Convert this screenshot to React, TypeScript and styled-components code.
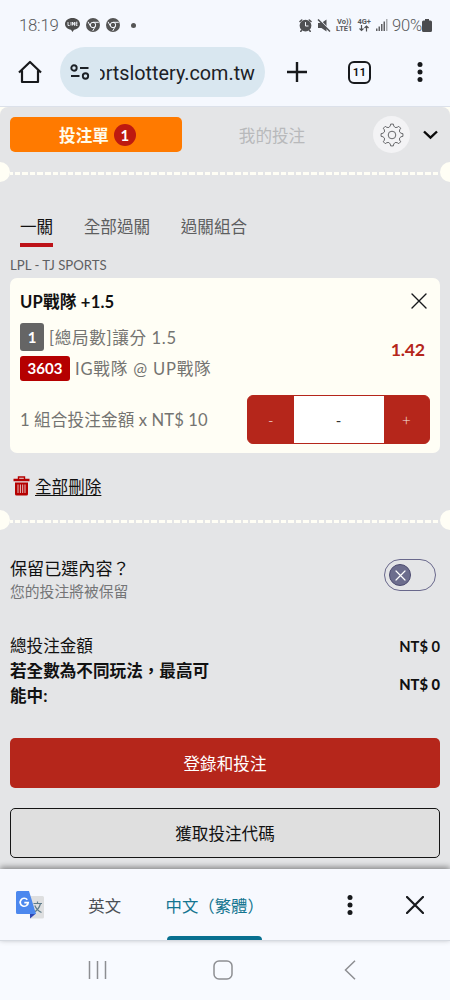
import React from 'react';
import styled, { createGlobalStyle } from 'styled-components';

const GlobalStyle = createGlobalStyle`
  * { box-sizing: border-box; }
  body { margin: 0; background: #fffff7; }
  button { font: inherit; border: 0; padding: 0; margin: 0; background: none; color: inherit; }
  svg { display: block; flex: none; }
`;

const cream = '#fffef5';
const red = '#b5261b';

const Screen = styled.div`
  width: 450px;
  height: 1000px;
  display: flex;
  flex-direction: column;
  overflow: hidden;
  background: ${cream};
  color: #111;
  font-family: Lato, 'Noto Sans CJK TC', sans-serif;
  font-size: 16.6px;
  white-space: nowrap;
`;

const BrowserTop = styled.header`
  flex: none;
  height: 107px;
  background: #f5f8fe;
  border-bottom: 1px solid #dce1ea;
  font-family: Roboto, sans-serif;
`;

const StatusBar = styled.div`
  height: 47px;
  padding: 3px 18px 0 19px;
  display: flex;
  align-items: center;
  color: #58595c;
  font-size: 17px;
  font-weight: 300;
`;

const Clock = styled.span`
  width: 46px;
  font-size: 16.8px;
  letter-spacing: -0.25px;
`;

const StatusIcons = styled.div<{ $gap: number }>`
  display: flex;
  align-items: center;
  gap: ${(p) => p.$gap}px;
`;

const Dot = styled.span`
  width: 5px;
  height: 5px;
  margin-left: 5px;
  border-radius: 50%;
  background: #555;
`;

const Spacer = styled.div`
  flex: 1;
`;

const Network = styled.div`
  display: flex;
  flex-direction: column;
  align-items: center;
  font-size: 7.5px;
  font-weight: 700;
  line-height: 7px;
`;

const Percent = styled.span`
  font-size: 16.6px;
  letter-spacing: -0.2px;
  margin-left: 4px;
`;

const AddressRow = styled.div`
  height: 50px;
  display: flex;
  align-items: center;
  padding: 0 27px 0 18px;
`;

const Address = styled.div`
  width: 205px;
  height: 50px;
  margin: 0 22px 0 18px;
  padding-left: 10px;
  border-radius: 25px;
  display: flex;
  align-items: center;
  background: #d9e7f0;
  color: #1c2126;
  font-size: 19.8px;
`;

const Host = styled.span`
  width: 155px;
  margin: 2px 0 0 10px;
  display: flex;
  justify-content: flex-end;
  overflow: hidden;
`;

const TabCount = styled.div`
  width: 23px;
  height: 23px;
  margin: 0 auto 0 41px;
  border: 2px solid #17191c;
  border-radius: 6px;
  display: flex;
  align-items: center;
  justify-content: center;
  font-size: 11.5px;
  font-weight: 600;
  letter-spacing: 0.3px;
`;

const Slip = styled.main`
  flex: none;
  height: 762px;
  border-radius: 8px 8px 0 0;
  background: #e4e5e7;
  display: flex;
  flex-direction: column;
  & > * { flex: none; }
`;

const SlipHeader = styled.div`
  height: 55px;
  padding: 0 10px;
  display: flex;
  align-items: center;
`;

const SlipTab = styled.button<{ $active?: boolean }>`
  width: ${(p) => (p.$active ? 172 : 180)}px;
  height: 35px;
  padding-left: ${(p) => (p.$active ? 3 : 0)}px;
  border-radius: 5px;
  display: flex;
  align-items: center;
  justify-content: center;
  gap: 5px;
  background: ${(p) => (p.$active ? '#ff7a00' : 'transparent')};
  color: ${(p) => (p.$active ? '#fffbea' : '#b8b9bb')};
  font-weight: ${(p) => (p.$active ? 700 : 400)};
`;

const Badge = styled.span`
  width: 22px;
  height: 22px;
  border-radius: 50%;
  background: #bd1a10;
  display: flex;
  align-items: center;
  justify-content: center;
  font-size: 15px;
  color: #fff;
`;

const GearButton = styled.button`
  width: 37px;
  height: 37px;
  margin: 0 13px 0 11px;
  border-radius: 50%;
  background: #f3f3f5;
  display: flex;
  align-items: center;
  justify-content: center;
`;

const Perforation = styled.div`
  height: 20px;
  display: flex;
  align-items: center;
  justify-content: space-between;
`;

const Notch = styled.span<{ $side: 'left' | 'right' }>`
  width: 10px;
  height: 20px;
  border-radius: ${(p) => (p.$side === 'left' ? '0 10px 10px 0' : '10px 0 0 10px')};
  background: ${cream};
`;

const Dashes = styled.span`
  flex: 1;
  height: 3px;
  margin-top: 3px;
  background: repeating-linear-gradient(90deg, ${cream} 0 2.6px, transparent 2.6px 4.6px, ${cream} 4.6px 7.6px);
`;

const ModeTabs = styled.nav`
  height: 65px;
  padding-left: 20px;
  display: flex;
  align-items: flex-end;
  gap: 30.6px;
  color: #5d5e60;
`;

const ModeTab = styled.button<{ $active?: boolean }>`
  height: 34px;
  line-height: 26px;
  padding-bottom: 2px;
  border-bottom: 4px solid ${(p) => (p.$active ? '#bd1218' : 'transparent')};
  color: ${(p) => (p.$active ? '#111' : 'inherit')};
`;

const League = styled.div`
  height: 31px;
  padding: 8px 0 0 10px;
  line-height: 20px;
  font-size: 13.2px;
  color: #5f6062;
`;

const BetCard = styled.section`
  height: 175px;
  margin: 0 10px;
  padding: 10px 10px 0;
  border-radius: 7px;
  background: ${cream};
`;

const CardTop = styled.div`
  height: 26px;
  padding-right: 3px;
  display: flex;
  align-items: center;
  justify-content: space-between;
  font-weight: 700;
  letter-spacing: 0.2px;
`;

const CardInfo = styled.div`
  height: 72px;
  padding-right: 5px;
  display: flex;
  align-items: center;
  justify-content: space-between;
`;

const Lines = styled.div`
  display: flex;
  flex-direction: column;
  padding-top: 5px;
`;

const Line = styled.div`
  height: 31px;
  display: flex;
  align-items: center;
  gap: 5px;
  color: #747471;
`;

const Chip = styled.span<{ $red?: boolean }>`
  width: ${(p) => (p.$red ? 50 : 24)}px;
  height: ${(p) => (p.$red ? 25 : 28)}px;
  border-radius: 3px;
  background: ${(p) => (p.$red ? '#b50000' : '#656565')};
  color: #fff;
  display: flex;
  align-items: center;
  justify-content: center;
  font-size: 15px;
  font-weight: 700;
`;

const Spaced = styled.span<{ $by: number }>`
  letter-spacing: ${(p) => p.$by}px;
`;

const Odds = styled.strong`
  margin-top: -2px;
  font-size: 17.8px;
  letter-spacing: -0.2px;
  color: ${red};
`;

const StakeRow = styled.div`
  height: 49px;
  margin-top: 9px;
  display: flex;
  align-items: center;
  justify-content: space-between;
  color: #747471;
`;

const StakeLabel = styled.span`
  padding-bottom: 1px;
  letter-spacing: 0.12px;
`;

const Stepper = styled.div`
  width: 183px;
  height: 49px;
  border: 1px solid ${red};
  border-radius: 6px;
  background: ${red};
  display: flex;
`;

const StepButton = styled.button`
  width: 45.500px;
  color: #f8e6e1;
  font-size: 15px;
  font-weight: 300;
`;

const Stake = styled.div`
  flex: 1;
  background: #fff;
  color: #333;
  display: flex;
  align-items: center;
  justify-content: center;
  font-size: 15px;
`;

const DeleteRow = styled.div`
  height: 57px;
  padding: 9px 0 0 13px;
  display: flex;
  align-items: center;
  gap: 5px;
`;

const DeleteLink = styled.button`
  text-decoration: underline;
  text-underline-offset: 2px;
  text-decoration-thickness: 1px;
`;

const KeepRow = styled.div`
  height: 104px;
  padding: 0 14px 0 10px;
  display: flex;
  align-items: center;
  justify-content: space-between;
`;

const KeepText = styled.div`
  padding-bottom: 4px;
  display: flex;
  flex-direction: column;
  line-height: 23px;
  font-size: 17.1px;
`;

const KeepHint = styled.span`
  font-size: 14.8px;
  color: #747577;
`;

const Toggle = styled.button`
  width: 52px;
  height: 32px;
  margin-bottom: 14px;
  padding-left: 4px;
  border: 1.4px solid #69688c;
  border-radius: 16px;
  display: flex;
  align-items: center;
`;

const Knob = styled.span`
  width: 22px;
  height: 22px;
  border: 1.5px solid #4c4b70;
  border-radius: 50%;
  background: #6c6d8d;
  display: flex;
  align-items: center;
  justify-content: center;
`;

const Totals = styled.div`
  height: 104px;
  padding: 0 10px;
  line-height: 25px;
`;

const TotalRow = styled.div<{ $bold?: boolean }>`
  display: flex;
  align-items: center;
  justify-content: space-between;
  font-weight: ${(p) => (p.$bold ? 700 : 400)};
`;

const TotalLabel = styled.span`
  width: 202px;
  white-space: normal;
`;

const Amount = styled.strong`
  font-size: 14.7px;
`;

const Action = styled.button<{ $outline?: boolean }>`
  height: 50px;
  margin: 0 10px 20px;
  border-radius: 5px;
  border: ${(p) => (p.$outline ? '1.4px solid #151515' : '0')};
  background: ${(p) => (p.$outline ? '#dfdfdf' : red)};
  color: ${(p) => (p.$outline ? '#111' : '#fff')};
`;

const TranslateBar = styled.div`
  position: relative;
  flex: none;
  height: 72px;
  padding: 0 26px 0 16px;
  display: flex;
  align-items: center;
  background: #f7f9fe;
  border-bottom: 1px solid #d6dae1;
  box-shadow: 0 -2px 6px rgba(0, 0, 0, 0.42);
`;

const Language = styled.button<{ $active?: boolean }>`
  width: ${(p) => (p.$active ? 95 : 33)}px;
  height: 71px;
  margin-left: 45px;
  padding-top: 3px;
  display: flex;
  flex-direction: column;
  justify-content: space-between;
  font-size: 16.4px;
  line-height: 68px;
  color: ${(p) => (p.$active ? '#147590' : '#4b4f55')};
  &::after {
    content: '';
    height: 4px;
    width: 100%;
    margin-top: -4px;
    border-radius: 4px 4px 0 0;
    background: ${(p) => (p.$active ? '#087090' : 'transparent')};
  }
`;

const LanguageName = styled.span`
  height: 68px;
  margin-left: -1.5px;
`;

const SystemNav = styled.footer`
  flex: none;
  height: 59px;
  padding: 0 94px 2px 88px;
  display: grid;
  grid-template-columns: 125px 1fr auto;
  align-items: center;
  background: #f8faff;
`;

const ChromeGlyph = () => (
  <svg width="14" height="14" viewBox="0 0 14 14">
    <circle cx="7" cy="7" r="7" fill="#555" />
    <circle cx="7" cy="7" r="2.7" fill="none" stroke="#f5f8fe" strokeWidth="1" />
    <path d="M7 4.3h5.8M4.6 8.3 2 3.8M9.4 8.3 6.7 13" stroke="#f5f8fe" strokeWidth="1" />
  </svg>
);

const MoreIcon = () => (
  <svg width="6" height="20" viewBox="0 0 6 20" fill="#17191c">
    <circle cx="3" cy="2.5" r="2.5" />
    <circle cx="3" cy="10" r="2.5" />
    <circle cx="3" cy="17.5" r="2.5" />
  </svg>
);

const CloseIcon = ({ size, width, color = '#17191c' }: { size: number; width: number; color?: string }) => (
  <svg width={size} height={size} viewBox={`0 0 ${size} ${size}`}>
    <path d={`M1 1 ${size - 1} ${size - 1}M${size - 1} 1 1 ${size - 1}`} stroke={color} strokeWidth={width} strokeLinecap="round" />
  </svg>
);

const gearPath = (() => {
  const pts: string[] = [];
  const at = (r: number, deg: number) => {
    const a = (deg * Math.PI) / 180;
    return `${(12 + r * Math.cos(a)).toFixed(2)} ${(12 + r * Math.sin(a)).toFixed(2)}`;
  };
  for (let i = 0; i < 8; i++) {
    const d = i * 45 - 90;
    pts.push(`${i ? 'L' : 'M'}${at(11, d - 7)}L${at(11, d + 7)}L${at(9.2, d + 11)}Q${at(7.2, d + 22.5)} ${at(9.2, d + 34)}`);
  }
  return pts.join('') + 'Z';
})();

const TranslateIcon = () => (
  <svg width="28" height="28" viewBox="0 0 28 28">
    <path d="M13 5h13.5A1.5 1.5 0 0 1 28 6.5V26a1.5 1.5 0 0 1-1.5 1.5H14z" fill="#dedfe0" />
    <path d="M17.5 12.5H26M21.5 10.5v2M24.5 12.5c-1 4-3.5 7-6.5 9M18.8 14.5c1.2 3 3.5 5.5 6.7 7" stroke="#607d8b" strokeWidth="1.2" fill="none" />
    <path d="M14 22.5h6L14 27.5z" fill="#3049b5" />
    <path d="M1.5 0H13l7 23H1.5A1.5 1.5 0 0 1 0 21.5v-20A1.5 1.5 0 0 1 1.5 0z" fill="#4c88ee" />
    <path d="M11.3 8.7a4 4 0 1 0 .9 2.9H8.3" stroke="#fff" strokeWidth="1.7" fill="none" />
  </svg>
);

export default function App() {
  return (
    <Screen>
      <GlobalStyle />
      <BrowserTop>
        <StatusBar>
          <Clock>18:19</Clock>
          <StatusIcons $gap={6}>
            <svg width="15" height="14" viewBox="0 0 15 14">
              <path d="M7.5 0C3.4 0 0 2.6 0 6c0 3 2.6 5.3 6 5.8L7.5 14 9 11.8c3.4-.5 6-2.8 6-5.8 0-3.4-3.4-6-7.5-6z" fill="#4c4c4c" />
              <path d="M3 4v3.5h1.6M6 4v3.5M7.5 7.5V4l2 3.5V4M12.5 4.2H11v3.2h1.5M11 5.8h1.5" stroke="#f5f8fe" strokeWidth=".9" fill="none" />
            </svg>
            <ChromeGlyph />
            <ChromeGlyph />
            <Dot />
          </StatusIcons>
          <Spacer />
          <StatusIcons $gap={5}>
            <svg width="13" height="13" viewBox="0 0 13 13" stroke="#505154" strokeWidth="1.6" strokeLinecap="round">
              <circle cx="6.5" cy="6.6" r="5.1" fill="#505154" />
              <path d="M1 2.5 2.7 1M12 2.5 10.3 1M2.5 11.5l-.7.8M10.5 11.5l.7.8" />
              <path d="M6.5 3.5V7h2.6" stroke="#f5f8fe" strokeWidth="1" fill="none" />
            </svg>
            <svg width="14" height="13" viewBox="0 0 14 13">
              <path d="M1 4h3.5L9.5.5v12L4.5 9H1z" fill="#505154" />
              <path d="M2 0 14 12.5" stroke="#f5f8fe" strokeWidth="1.2" />
              <path d="M1 .5 13 12.5" stroke="#505154" strokeWidth="1.5" />
            </svg>
            <Network><span>Vo))</span><span>LTE1</span></Network>
            <Network>
              <span>4G+</span>
              <svg width="10" height="7" viewBox="0 0 10 7" stroke="#505154" strokeWidth="1.2" fill="none">
                <path d="M2.5 0v5.5M.5 3.5l2 2 2-2M7.5 6.5V1M5.5 3l2-2 2 2" />
              </svg>
            </Network>
            <svg width="12" height="12" viewBox="0 0 12 12" fill="#606164">
              <path d="M0 9.5h1.5V12H0zM2.5 7.5H4V12H2.5zM5 5h1.5v7H5zM7.5 2.5H9V12H7.5z" />
              <path d="M10 0h1.5v12H10z" fill="#a9abaf" />
            </svg>
          </StatusIcons>
          <Percent>90%</Percent>
          <svg width="10" height="13" viewBox="0 0 10 13">
            <path d="M3 0h4v1.5h1.5A1.5 1.5 0 0 1 10 3v8.5A1.5 1.5 0 0 1 8.5 13h-7A1.5 1.5 0 0 1 0 11.5V3a1.5 1.5 0 0 1 1.5-1.5H3z" fill="#4b4c4f" />
          </svg>
        </StatusBar>
        <AddressRow>
          <svg width="24" height="24" viewBox="0 0 24 24" fill="none" stroke="#17191c" strokeWidth="2.2">
            <path d="M1 12.5 12 2l11 10.5M4 10.5V22h16V10.5" strokeLinejoin="round" />
          </svg>
          <Address>
            <svg width="20" height="16" viewBox="0 0 20 16" fill="none" stroke="#1c2126" strokeWidth="1.9">
              <circle cx="4" cy="4" r="2.7" />
              <circle cx="15.5" cy="12" r="2.7" />
              <path d="M10 4h8.5M1 12h8.5" />
            </svg>
            <Host>ortslottery.com.tw</Host>
          </Address>
          <svg width="20" height="20" viewBox="0 0 20 20">
            <path d="M10 0v20M0 10h20" stroke="#17191c" strokeWidth="2.4" />
          </svg>
          <TabCount>11</TabCount>
          <MoreIcon />
        </AddressRow>
      </BrowserTop>

      <Slip>
        <SlipHeader>
          <SlipTab $active>投注單<Badge>1</Badge></SlipTab>
          <SlipTab>我的投注</SlipTab>
          <GearButton>
            <svg width="24" height="24" viewBox="0 0 24 24" fill="none" stroke="#66676a" strokeLinejoin="round">
              <path d={gearPath} />
              <circle cx="12" cy="12" r="3.8" />
            </svg>
          </GearButton>
          <svg width="15" height="10" viewBox="0 0 15 10">
            <path d="m1 1.5 6.5 6.2L14 1.5" fill="none" stroke="#0a0a0a" strokeWidth="2.4" />
          </svg>
        </SlipHeader>
        <Perforation><Notch $side="left" /><Dashes /><Notch $side="right" /></Perforation>
        <ModeTabs>
          <ModeTab $active>一關</ModeTab>
          <ModeTab>全部過關</ModeTab>
          <ModeTab>過關組合</ModeTab>
        </ModeTabs>
        <League>LPL - TJ SPORTS</League>

        <BetCard>
          <CardTop>
            <span>UP戰隊 +1.5</span>
            <CloseIcon size={16} width={1.4} />
          </CardTop>
          <CardInfo>
            <Lines>
              <Line><Chip>1</Chip><Spaced $by={0.65}>[總局數]讓分 1.5</Spaced></Line>
              <Line><Chip $red>3603</Chip><Spaced $by={0.8}>IG戰隊 @ UP戰隊</Spaced></Line>
            </Lines>
            <Odds>1.42</Odds>
          </CardInfo>
          <StakeRow>
            <StakeLabel>1 組合投注金額 x NT$ 10</StakeLabel>
            <Stepper>
              <StepButton>-</StepButton>
              <Stake>-</Stake>
              <StepButton>+</StepButton>
            </Stepper>
          </StakeRow>
        </BetCard>

        <DeleteRow>
          <svg width="17" height="20" viewBox="0 0 17 20">
            <path d="M5.5 3V1h6v2" fill="none" stroke="#b50000" strokeWidth="1.4" />
            <path d="M.5 2.8h16v2.4H.5zM2 6.5h13V18a1.5 1.5 0 0 1-1.5 1.5h-10A1.5 1.5 0 0 1 2 18z" fill="#b50000" />
            <path d="M5 8.5V17M7.4 8.5V17M9.7 8.5V17M12 8.5V17" stroke="#e9d5d6" strokeWidth=".9" />
          </svg>
          <DeleteLink>全部刪除</DeleteLink>
        </DeleteRow>
        <Perforation><Notch $side="left" /><Dashes /><Notch $side="right" /></Perforation>

        <KeepRow>
          <KeepText>
            <span>保留已選內容？</span>
            <KeepHint>您的投注將被保留</KeepHint>
          </KeepText>
          <Toggle aria-label="保留已選內容"><Knob><CloseIcon size={11} width={1.2} color="#fff" /></Knob></Toggle>
        </KeepRow>

        <Totals>
          <TotalRow><TotalLabel>總投注金額</TotalLabel><Amount>NT$ 0</Amount></TotalRow>
          <TotalRow $bold><TotalLabel>若全數為不同玩法，最高可能中:</TotalLabel><Amount>NT$ 0</Amount></TotalRow>
        </Totals>

        <Action>登錄和投注</Action>
        <Action $outline>獲取投注代碼</Action>
      </Slip>

      <TranslateBar>
        <TranslateIcon />
        <Language><LanguageName>英文</LanguageName></Language>
        <Language $active><LanguageName>中文（繁體）</LanguageName></Language>
        <Spacer />
        <StatusIcons $gap={53}>
          <MoreIcon />
          <CloseIcon size={18} width={2.2} />
        </StatusIcons>
      </TranslateBar>
      <SystemNav>
        <svg width="19" height="20" viewBox="0 0 19 20">
          <path d="M1.5 1v18M9.5 1v18M17.5 1v18" stroke="#8d8e92" strokeWidth="1.5" />
        </svg>
        <svg width="20" height="20" viewBox="0 0 20 20">
          <rect x="1" y="1" width="18" height="18" rx="5" fill="none" stroke="#8d8e92" strokeWidth="1.5" />
        </svg>
        <svg width="12" height="20" viewBox="0 0 12 20">
          <path d="M11 .8 1.5 10l9.5 9.2" fill="none" stroke="#8d8e92" strokeWidth="1.5" />
        </svg>
      </SystemNav>
    </Screen>
  );
}
